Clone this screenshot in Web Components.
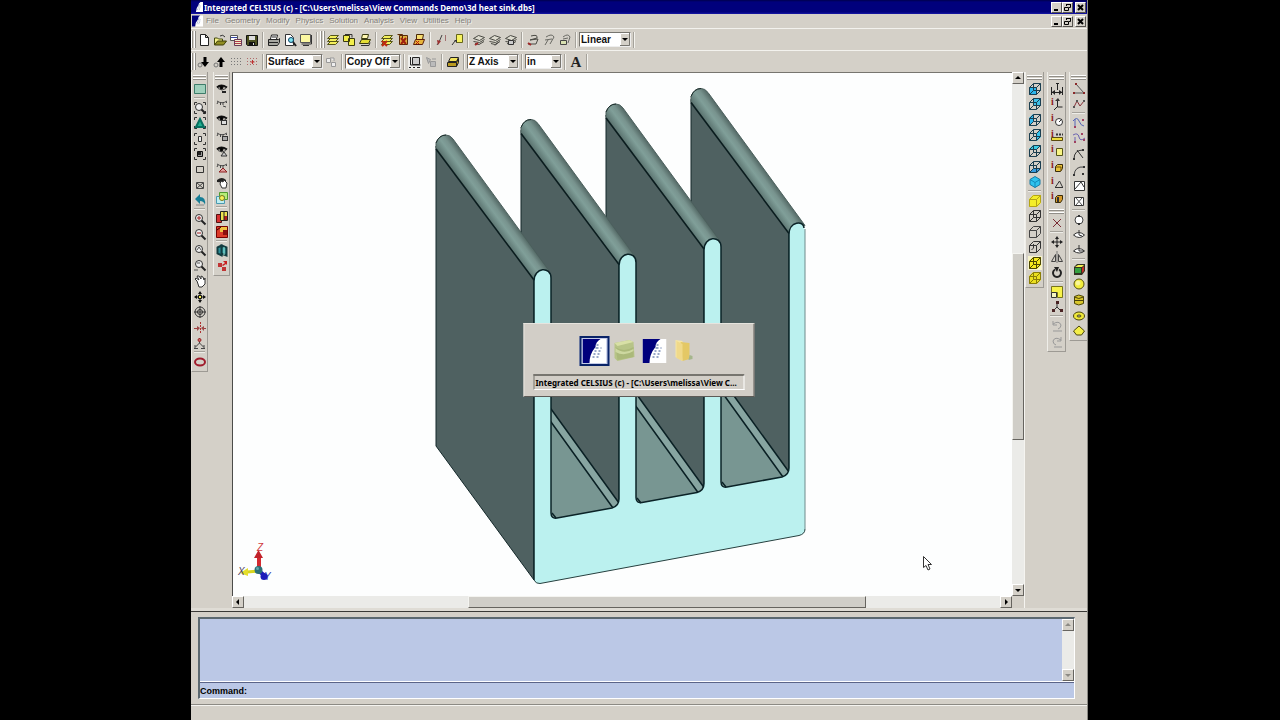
<!DOCTYPE html>
<html lang="en">
<head>
<meta charset="utf-8">
<title>Integrated CELSIUS (c)</title>
<style>
  html, body { margin: 0; height: 100%; background: #000; }
  body { font-family: "Liberation Sans", Arial, sans-serif; font-size: 8px; color: #000; }
</style>
</head>
<body>
<celsius-app></celsius-app>

<script>
/* ---------- icon drawings, 14 x 14 grid ---------- */
const p = (d, s = '#222', f = 'none', w = 1) => `<path d="${d}" stroke="${s}" fill="${f}" stroke-width="${w}"/>`;
const fill = (d, f) => `<path d="${d}" fill="${f}"/>`;
const circ = (x, y, r, s = '#222', f = 'none', w = 1) => `<circle cx="${x}" cy="${y}" r="${r}" stroke="${s}" fill="${f}" stroke-width="${w}"/>`;

const FACES = {
  front: 'M1 5h8v8h-8z', back: 'M5 1h8v8h-8z', left: 'M1 5l4-4v8l-4 4z', right: 'M9 5l4-4v8l-4 4z',
  top: 'M1 5l4-4h8l-4 4z', bottom: 'M1 13l4-4h8l-4 4z', all: 'M1 5l4-4h8v8l-4 4h-8z'
};
const WIRE = 'M1.500 5.500h7v7h-7z M5.500 1.500h7v7h-7z M1.500 5.500l4-4 M8.500 5.500l4-4 M8.500 12.500l4-4 M1.500 12.500l4-4';
const SOLID = 'M1.500 5.500h7v7h-7z M1.500 5.500l4-4h7v7l-4 4 M8.500 5.500l4-4';
const cube = (face, color, lines = WIRE, s = '#1a3e50') => (face ? fill(FACES[face], color) : '') + p(lines, s);

const eye = extra => p('M2 5.5q4-4 10 0', '#111', 'none', 2) + p('M3 6.5q4 3 8 0', '#444') + circ(6.5, 5.5, 1.5, '#000', '#000') + extra;
const lash = extra => p('M2 4q5 3.500 10 0 M3 5l-1 2 M5.500 6v2 M8 6v2 M11 5l1 1', '#444') + extra;
const lens = extra => circ(6, 6, 3.5, '#333', '#eee') + p('M8.500 8.500l4 4', '#222', 'none', 2) + extra;
const box = (x, y, f = '#f4ef84', s = '#333') => `<rect x="${x}.5" y="${y}.5" width="5" height="4" fill="${f}" stroke="${s}"/>`;
const sheets = extra => p('M1.500 11.500l3-3h8l-3 3z M1.500 8.500l3-3h8l-3 3z M1.500 5.500l3-3h8l-3 3z', '#55551a', '#f4f05c') + extra;
const gsheets = extra => p('M1.500 5.500l5-3 6 2-5 3z M1.500 8.500l6 1 5-3 M3 10.500l4 1 5-3', '#4a4a44', '#dedcd0') + extra;
const corners = extra => p('M1.500 4v-2.500h2.500 M10 1.500h2.500v2.500 M12.500 10v2.500h-2.500 M4 12.500h-2.500v-2.500', '#333') + extra;
const info = extra => `<text x="1" y="8" fill="#8e1c1c" font-family="Liberation Serif, serif" font-weight="bold" font-size="10">i</text>` + extra;

const ICONS = {
  new: p('M3.500 1.500h5l3 3v8h-8z M8.500 1.500v3h3', '#222', '#fff'),
  open: p('M1.500 12v-7h3l1 1h4v2', '#444a10', '#f4f08a') + p('M1.500 12l3-4h9l-3 4z', '#3c3c08', '#8f8c22') + p('M7 3q3-2 5 1', '#333'),
  merge: p('M1.500 2.500h7v5h-7z', '#555', '#fff') + p('M2 4.500h6', '#3647a5') + p('M5.500 6.500h7v6h-7z', '#6a3b58', '#eec') + p('M6 8.500h6 M6 10.500h6', '#b03a4a'),
  save: p('M1.500 2.500h11v10h-10l-1-1z', '#111', '#4b5020') + fill('M4 3h6v4h-6z', '#ddd') + fill('M4 9h6v3h-6z', '#111') + fill('M8 10h1v2h-1z', '#ddd'),
  print: p('M3.500 6l1-4h6l-1 4', '#222', '#fff') + p('M1.500 6.500h10l1-1v4l-2 3h-9z', '#222', '#a7a7a0') + p('M2 9.500h9 M5 4h4', '#222'),
  preview: p('M2.500 1.500h5l3 3v8h-8z', '#333', '#fff') + circ(8, 7, 2.5, '#146', '#7fe3ef') + p('M10 9l3 4', '#222', 'none', 2),
  layout: p('M1.500 1.500h10v8h-10z', '#555', '#fbf7a0') + p('M12.500 2v9h-10 M4 12.500h6', '#333'),
  sheet1: sheets(''),
  sheet2: p('M1.500 2.500h6v6h-6z M6.500 5.500h6v7h-6z', '#3a3a10', '#f2ee4a') + p('M3 1.500h7v3', '#333'),
  sheet3: p('M4.500 1.500h6l-1 4h-6z', '#3a3a10', '#fff8b0') + p('M1.500 10.500l2-4h9l-2 4z', '#3a3a10', '#e5de36') + p('M3 12.500h8l1-3', '#333'),
  del1: sheets(p('M2 8l5 5 M7 8l-5 5', '#c02a10', 'none', 2)),
  del2: p('M3.500 2.500h8v9h-8z M1.500 1.500h5v4', '#5a2a08', '#e0b040') + p('M5 5l5 6 M10 5l-5 6', '#a02010', 'none', 2),
  del3: p('M4.500 1.500h7l-1 5h-6z', '#4a2a08', '#f6dd70') + p('M1.500 11.500l2-5h9l-2 5z', '#5a1c08', '#e6b43a') + p('M4 8l3 3 M7 8l-3 3', '#b81808'),
  pick: p('M3 12l2-3 3-7', '#444') + p('M11.500 2v6', '#a07070') + fill('M3 7l4 1-3 4z', '#9c3030'),
  pickbox: p('M6.500 1.500h6v8h-6z', '#66661a', '#f6f260') + p('M2 12l3-4', '#333') + fill('M4 7h3v3z', '#333'),
  g1: gsheets(p('M3 12l3-2', '#a02828', 'none', 2)),
  g2: gsheets(p('M7 12.500l3-3', '#333')),
  g3: gsheets(p('M4.500 7.500h5v4h-5z', '#333', '#ccc')),
  h1: p('M5 3q7-2 6 2l-7 2 8-1-2 5h-8', '#4a4a44') + p('M2 10l3 2', '#a02828', 'none', 2),
  h2: p('M4 4q6-4 8 0l-4 7 M3 7l7-1 M3 12l3-5', '#6a6a64'),
  h3: p('M5 4q5-4 7 0l-2 6 M5 6l5-1', '#6a6a64') + p('M2.500 7.500h6v4h-6z', '#444', '#d8e0b0'),
  dotdown: circ(3, 10, 2, '#777') + p('M8 2v6', '#000', 'none', 3) + fill('M4 7h8l-4 5z', '#000'),
  dotup: circ(3, 10, 2, '#777') + p('M8 6v6', '#000', 'none', 3) + fill('M4 7h8l-4-5z', '#000'),
  grid: '<path d="M2 3.500h10 M2 6.500h10 M2 9.500h10" stroke="#777" stroke-dasharray="1 2"/>',
  snap: '<path d="M2 3.500h10 M2 6.500h10 M2 9.500h10" stroke="#b06a6a" stroke-dasharray="1 2"/>' + p('M7.500 5v4 M5.500 7h4', '#c03030'),
  ghost: p('M2.500 3.500h4v4h-4z M7.500 7.500h4v4h-4z M6 3h4v3', '#999', '#eee'),
  frame: '<rect width="14" height="14" fill="#efefec"/>' + p('M4.500 2.500h7v7h-7z', '#222', '#ccc') + p('M2.500 2v8h10 M1 12.500h2 M5 12.500h2 M9 12.500h3', '#222'),
  ghost2: p('M2.500 2.500l4 2-2 4z M6.500 6.500h5v5h-5z', '#999', '#bbb') + p('M8 4h4', '#999'),
  slab: p('M4.500 2.500h8l-2 4h-8z', '#222', '#f3e45a') + p('M1.500 7.500h9v4h-9z M10.500 7.500l2-4v4l-2 4', '#222', '#b99a20'),
  bold: `<text x="7" y="12" text-anchor="middle" fill="#222" font-family="Liberation Serif, serif" font-weight="bold" font-size="15">A</text>`,

  region: fill('M1 2h12v10h-12z', '#9fd0bc') + p('M1.500 2.500h11v9h-11z', '#3e7c6a'),
  zoomwin: corners(lens('')),
  zoomfit: corners(p('M3 11l4-8 4 8z', '#087060', '#20b090', 2)),
  exts: corners(p('M5.500 4.500h3v5h-3z', '#333', '#eee')),
  extf: corners(p('M4.500 4.500h5v5h-5z', '#111', '#999') + fill('M5 5h3v3h-3z', '#222')),
  sq: p('M3.500 4.500h7v6h-7z', '#333'),
  sqx: p('M3.500 4.500h7v6h-7z M4 5l6 5 M10 5l-6 5', '#444'),
  undoview: fill('M2 6l5-5v3q6 0 5 8-1-4-5-4v3z', '#177d95') + p('M3 12h8', '#888'),
  zin: lens(p('M4 6h4 M6 4v4', '#a02020')), zout: lens(p('M4 6h4', '#a02020')),
  z2: lens(p('M4 7l2-3 2 3', '#555')), z3: lens(p('M4 5h3 M1 12h4', '#555')),
  hand: p('M4 7l-2-2 1-1 3 2-2-4 2 0 2 3 0-3 2 1 1 3 1-2 0 6-3 3h-3z', '#333', '#fff'),
  pan: p('M7 2v10 M2 7h10', '#111') + p('M5.500 5.500h3v3h-3z', '#111', '#f4ed50') + fill('M7 1l2 3h-4z M7 13l2-3h-4z M1 7l3-2v4z M13 7l-3-2v4z', '#111'),
  target: circ(7, 7, 5, '#333') + circ(7, 7, 2.5, '#333') + p('M7 1v12 M1 7h12', '#333'),
  flip: '<path d="M7.500 1v12" stroke="#b03030" stroke-dasharray="2 1"/>' + p('M1 7.500h3 M10 7.500h3', '#a04040') + fill('M4 5l3 2-3 3z M11 5l-3 2 3 3z', '#9c4848'),
  nodes: p('M6.500 2v5 M6.500 7l-4 4 M6.500 7l4 4 M1 12.500h4 M8 12.500h4 M2 9v3 M11 9v3', '#444') + circ(6.5, 4, 1.5, '#922', '#c66'),
  ring: `<ellipse cx="7" cy="7" rx="5" ry="3.500" stroke="#a01c2c" stroke-width="2"/>`,
  eye1: eye(p('M7 10h4', '#222', 'none', 2)),
  lash1: lash(p('M8 9l3 1', '#444')),
  eye2: eye(box(6, 7, '#ddd')), lash2: lash(box(7, 7, '#aaa')),
  eye3: eye(p('M6 12l3-4 3 4z', '#333', '#ccc')), lash3: lash(p('M4 12l4-4 4 4z', '#8e2020', '#e0a0a0')),
  eyehand: fill('M2 4q5-4 9 0v3l-9-1z', '#222') + p('M5 8l1-3 2 1 1-2 3 3-1 5h-4z', '#333', '#fff'),
  overlap: p('M4.500 1.500h8v7h-8z', '#4f9a30', '#b6ec7a') + p('M1.500 5.500h8v7h-8z', '#4a9ab0', '#bfeef2') + circ(7, 7, 2.5, '#787818', '#f8f15a'),
  cols1: p('M1.500 4.500h5v8h-5z', '#511', '#d83030') + p('M5.500 1.500h7v9h-7z', '#222', '#eee250') + fill('M9 6h3v4h-3z', '#b02020') + p('M9 2v9', '#222'),
  cols2: p('M1.500 1.500h11v11h-11z', '#700', '#dc3a28') + fill('M5 2h7v5h-7z', '#f0c040') + fill('M8 5h4v5h-4z', '#8c1010') + p('M2 5l4-3', '#300'),
  cols3: p('M2.500 3.500l4-2v10l-4-2z M6.500 1.500l5 2v8l-5-2z', '#123c40', '#2b8f98', 2) + p('M9 3v8', '#9ed'),
  redmove: fill('M8 2h4v4l-1-1-3 2-1-1 3-2z', '#c82020') + fill('M3 4h4v4h-4z M7 8h4v4h-4z', '#c03434'),

  cFront: cube('front', '#2cb7ee'), cBack: cube('back', '#3fbfe8'), cLeft: cube('left', '#2cb7ee'),
  cRight: cube('right', '#37c3ee'), cTop: cube('top', '#3ccbe4'), cBottom: cube('bottom', '#379ce0'),
  cIso: p('M7 1.500l5 3v5l-5 3-5-3v-5z', '#167ba5', '#2fc3ee') + p('M2 4.500l5 3 5-3 M7 7.500v5', '#1389ba'),
  cYel: cube('all', '#f4ee2a', SOLID, '#b5a514'), cWire: cube('', '', WIRE, '#333'), cHid: cube('', '', SOLID, '#444'),
  cHid2: cube('', '', SOLID + ' M3.500 10l2-2v-4', '#333'),
  cWireSel: '<rect width="14" height="14" fill="#f6f3cd"/>' + cube('all', '#f5e91c', WIRE, '#4b4600'),
  cYel2: cube('all', '#ebdf20', WIRE, '#8a7d08'),

  dim: p('M1.500 5v8 M12.500 5v8 M2 10.500h10 M7.500 2v6', '#222') + fill('M2 10l3-2v5z M12 10l-3-2v5z M6 1h3v1h-3z', '#222'),
  iaxis: info(p('M7.500 3v7h5 M7 10l-3 3', '#222') + fill('M5 4l3-3 2 3z', '#333')),
  icirc: info(circ(9, 9, 3.5, '#333', '#fff') + p('M9 9l3-3', '#333')),
  irule: info(p('M1.500 8.500h11v3h-11z', '#5a4a10', '#eddc3c') + '<path d="M6 5.500h7" stroke="#333" stroke-dasharray="2 1" stroke-width="2"/>'),
  ibox: info(p('M6.500 4.500h6v7h-6z', '#55551a', '#f8f484')),
  ivol: info(p('M5.500 6.500l2-2h5v4l-2 3h-5z', '#3a2c08', '#e7c13a') + p('M6 7h5v4', '#6a4c08')),
  iang: info(p('M5 11.500h8 M5.500 11l4-6 3 6', '#333')),
  imass: info(p('M5.500 6.500l2-2h5v4l-2 3h-5z', '#3a2c08', '#d59a2a') + p('M8 6v5', '#333', 'none', 2)),
  x: p('M3 3l8 8 M11 3l-8 8', '#7a2c34'),
  move: p('M7 3v8 M3 7h8', '#222') + fill('M7 1l2 3h-4z M7 13l2-3h-4z M1 7l3-2v4z M13 7l-3-2v4z', '#222'),
  mirror: p('M1.500 11.500l4-7v7z M12.500 11.500l-4-7v7z', '#444') + p('M7 1v12', '#777'),
  rotate: p('M9 3.500a4 4 0 1 1-4 0', '#222', 'none', 2) + fill('M4 1h5l-2 5z', '#222'),
  scale: p('M1.500 1.500h11v11h-5v-5h-6z', '#77751a', '#f8f34a') + p('M1.500 7.500h5v5h-5z', '#333', '#f7f7c0'),
  axes: p('M7 7v-5 M7 7l-4 4 M7 7l4 4', '#333') + fill('M6 1h3v3h-3z M2 9h3v3h-3z M10 9h3v3h-3z', '#4a2424'),
  undo: p('M3 5q6-4 8 1 0 3-3 4 M3 2v4h4 M3 12h9', '#999'),
  redo: p('M11 5q-6-4-8 1 0 3 3 4 M11 2v4h-4 M4 12h8', '#999'),
  line: p('M4 2l8 9h-10', '#555') + fill('M3 1h2v2h-2z M1 10h2v2h-2z M11 10h2v2h-2z', '#8a2828'),
  poly: p('M2 10l3-6 3 5 4-5', '#8a3038') + fill('M1 9h2v2h-2z M11 3h2v2h-2z M4 3h2v2h-2z', '#555'),
  spl1: p('M1 5q4-5 6 0t5 5 M3 3v9', '#5566b8') + fill('M10 3h2v2h-2z M2 10h2v2h-2z', '#a04060'),
  spl2: p('M1 4q5-3 6 2t6 1 M3 6v6', '#6a62b0') + fill('M9 2h2v2h-2z M2 10h2v2h-2z M11 8h2v2h-2z', '#a04060'),
  arc1: p('M2 12q0-9 9-9 M5 3l6 8', '#333') + fill('M1 11h2v2h-2z M10 2h2v2h-2z', '#333'),
  arc2: p('M2 12q1-9 10-8', '#444') + fill('M1 11h2v2h-2z M11 3h2v2h-2z M10 10h2v2h-2z', '#333'),
  prof1: p('M2.500 3.500h10v9h-10z', '#333', '#fff') + p('M3 11l6-7 3 5', '#333'),
  prof2: p('M2.500 3.500h9v8h-9z', '#333', '#fff') + p('M4 4l6 7 M10 4l-6 7', '#555'),
  ci1: circ(7, 7, 4, '#444', '#fff') + fill('M6 2h2v2h-2z M6 10h2v2h-2z', '#333'),
  ci2: p('M1.500 7q5-5 11 0-5 5-11 0z', '#333', '#fff') + p('M7 2v5l3 1', '#333'),
  ci3: p('M1.500 8q5-5 11 0-5 4-11 0z', '#333', '#fff') + p('M7 2v6h5', '#333'),
  vbox: fill('M2 5l3-3h8v7l-3 4h-8z', '#332') + fill('M3 6h6v5h-6z', '#36a040') + fill('M3 5l3-2h6l-2 2z', '#f4ed50') + fill('M10 6l2-2v5l-2 2z', '#c83028'),
  vsph: circ(7, 7, 5, '#55500f', '#f2ec3c') + circ(6, 6, 2, '#faf79c', '#faf79c'),
  vcyl: p('M2.500 3.500q4-3 9 0v7q-5 3-9 0z', '#4a440a', '#d9c62c') + p('M2.500 4q4 3 9 0 M3 7.500h8', '#4a440a'),
  vtor: `<ellipse cx="7" cy="7" rx="5.500" ry="4" fill="#f0e93a" stroke="#4a440a"/><ellipse cx="7" cy="7" rx="2" ry="1" fill="#d4d0c8" stroke="#4a440a"/>`,
  vcone: p('M7 2l5.500 5-3 4h-5l-3-4z', '#4a440a', '#f4ee48'),
};

const define = (tag, css, html, after) => {
  const tpl = document.createElement('template');
  tpl.innerHTML = `<style>*{box-sizing:border-box}${css}</style>${html}`;
  customElements.define(tag, class extends HTMLElement {
    constructor() {
      super();
      this.attachShadow({ mode: 'open' }).append(tpl.content.cloneNode(true));
    }
    connectedCallback() { if (after) after(this, this.shadowRoot); }
  });
};

/* A run of icon buttons; the names attribute lists the icons */
define('tool-group', `
  :host { display: flex; flex: none; }
  :host([vertical]) { display: grid; grid-auto-rows: 1fr; justify-content: center; }
  button { display: flex; align-items: center; justify-content: center; width: 16px; height: 100%; min-height: 0; padding: 0; margin: 0; border: 0; background: none; }
  svg { display: block; width: 14px; height: 14px; flex: none; }`, '',
  (el, root) => {
    for (const n of el.getAttribute('names').split(' ')) {
      const b = document.createElement('button');
      b.type = 'button';
      b.setAttribute('aria-label', n);
      b.innerHTML = `<svg viewBox="0 0 14 14" fill="none">${ICONS[n]}</svg>`;
      root.append(b);
    }
  });

define('tool-sep', `
  :host { display: block; flex: none; width: 6px; height: 16px; padding: 0 2px; }
  i { display: block; height: 100%; border-left: 1px solid #a5a29b; border-right: 1px solid #f4f3ee; }
  :host([vertical]) { width: auto; height: 3px; padding: 0 2px; }
  :host([vertical]) i { height: 2px; border: 0; border-top: 1px solid #a5a29b; border-bottom: 1px solid #eeede8; }`, '<i></i>');

define('tool-grip', `
  :host { display: flex; flex: none; gap: 1px; width: 5px; height: 17px; }
  i { flex: 1; border-left: 1px solid #fff; border-right: 1px solid #918e88; }
  :host([vertical]) { flex-direction: column; width: auto; height: 9px; padding: 3px 1px 1px; }
  :host([vertical]) i { border: 0; border-top: 1px solid #fff; border-bottom: 1px solid #918e88; }`, '<i></i><i></i>');

define('tool-select', `
  :host { display: flex; flex: none; position: relative; height: 15px; border: 1px solid #77756f; border-right-color: #eee; border-bottom-color: #eee; background: #fff; }
  select { appearance: none; width: 100%; height: 100%; margin: 0; padding: 0 0 0 1px; border: 0; border-radius: 0; background: none; color: #111; font: bold 10px "Liberation Sans", Arial, sans-serif; }
  svg { position: absolute; right: 0; top: 0; width: 10px; height: 13px; pointer-events: none; }`,
  `<select><option></option></select>
   <svg viewBox="0 0 10 13"><path d="M0 0h10v13h-10z" fill="#d4d0c8"/><path d="M.5 12.500v-12h9" stroke="#fff" fill="none"/><path d="M9.500 0v12.500h-9.500" stroke="#77756f" fill="none"/><path d="M2 5h6l-3 3z" fill="#000"/></svg>`,
  (el, root) => {
    root.querySelector('option').textContent = el.getAttribute('value');
    root.querySelector('select').setAttribute('aria-label', el.getAttribute('label'));
  });

define('tool-row', `
  :host { display: flex; align-items: center; height: 22px; border-top: 1px solid #f3f2ee; }`, '<slot></slot>');

define('tool-column', `
  :host { display: flex; flex-direction: column; align-self: flex-start; flex: none; width: 19px; padding-bottom: 1px; border-left: 1px solid #efeee9; border-right: 1px solid #9d9a94; border-bottom: 1px solid #9d9a94; }`, '<slot></slot>');

/* Celsius program icon */
const APP_ICON = `<path d="M0 0h24v24h-24z" fill="#fff"/><path d="M0 0h18q-5 3-5 8-6 7-6 16h-7z" fill="#00007c"/><path d="M14 6h2M13 9h3M12 12h2M16 12h2M11 15h2M15 15h2M10 18h2M14 18h2M18 9h1" stroke="#33508f" stroke-width="1"/>`;

define('window-buttons', `
  :host { display: flex; flex: none; }
  button { width: 11px; height: 11px; padding: 0; border: 1px solid; border-color: #fff #55534f #55534f #fff; background: #d4d0c8; }
  button:last-child { margin-left: 2px; }
  svg { display: block; width: 9px; height: 9px; }`,
  `<button aria-label="Minimize"><svg viewBox="0 0 9 9"><path d="M2 7h4" stroke="#000" stroke-width="2"/></svg></button>
   <button aria-label="Restore"><svg viewBox="0 0 9 9" fill="none" stroke="#000"><path d="M3.500 3v-1.500h4v3h-1.500M3 1.500h5M1.500 4.500h4v3h-4z"/></svg></button>
   <button aria-label="Close"><svg viewBox="0 0 9 9"><path d="M2 2l5 5M7 2l-5 5" stroke="#000" stroke-width="2"/></svg></button>`);

define('title-bar', `
  :host { display: flex; align-items: center; height: 14px; padding: 0 1px 0 2px; background: linear-gradient(#00004c, #00007c 2px 12px, #1818a8); color: #fff; font: bold 8px "Noto Sans", "Liberation Sans", sans-serif; }
  svg { width: 10px; height: 10px; margin-right: 1px; flex: none; }
  span { flex: 1; white-space: nowrap; overflow: hidden; }`,
  `<svg viewBox="0 0 24 24">${APP_ICON}</svg><span><slot></slot></span><window-buttons></window-buttons>`);

define('menu-bar', `
  :host { display: flex; align-items: center; height: 14px; padding: 0 1px; }
  svg { width: 11px; height: 12px; margin-right: 3px; flex: none; }
  nav { display: flex; flex: 1; gap: 6px; }
  button { padding: 0; border: 0; background: none; color: #85827c; font: 8px/12px "Liberation Sans", Arial, sans-serif; text-shadow: 1px 1px #f0efe9; }`,
  `<svg viewBox="0 0 24 24">${APP_ICON}</svg>
   <nav>${['File', 'Geometry', 'Modify', 'Physics', 'Solution', 'Analysis', 'View', 'Utilities', 'Help'].map(t => `<button>${t}</button>`).join('')}</nav>
   <window-buttons></window-buttons>`);

/* Scroll bar: shares = flex shares of the track before, in and after the thumb */
define('scroll-bar', `
  :host { display: flex; flex: none; width: 12px; flex-direction: column; background: #ebebe8; }
  :host([horizontal]) { width: auto; height: 12px; flex-direction: row; }
  button { flex: none; width: 12px; height: 12px; padding: 0; border: 1px solid; border-color: #fff #66645f #66645f #fff; background: #d4d0c8; }
  svg { display: block; width: 10px; height: 10px; }
  :host([horizontal]) svg { transform: rotate(-90deg); }
  b { border: 1px solid; border-color: #f4f4f0 #66645f #66645f #f4f4f0; background: #d0cec8; }
  path { fill: #000; }
  :host([idle]) b { display: none; }
  :host([idle]) path { fill: #8c8a84; }`,
  `<button aria-label="Back"><svg viewBox="0 0 10 10"><path d="M2 6h6l-3-3z"/></svg></button><i></i><b></b><em></em>
   <button aria-label="Forward"><svg viewBox="0 0 10 10"><path d="M2 4h6l-3 3z"/></svg></button>`,
  (el, root) => {
    const [a, b, c] = (el.getAttribute('shares') || '1 0 1').split(' ');
    root.querySelector('i').style.flex = a;
    root.querySelector('b').style.flex = b;
    root.querySelector('em').style.flex = c;
  });

/* ---------- heat sink drawing ---------- */
/* Painted from the rear right: each fin hides what lies behind it, so the
   channel floor beside a fin goes down before the next fin to the left. */
const fins = [3, 2, 1, 0].map(i => {
  const x = 85 * i, y = -15.5 * i;
  const floor = i === 0 ? '' : `<g transform="translate(${x - 85} ${y + 15.5})">
    <path d="M546 402L619 503V509L546 522z" fill="#789692"/>
    <path d="M551 409L619 503L613 508L551 422z" fill="#87a5a1"/>
    <path d="M546 402L619 503M546 415L613 508" stroke="#0a2024" stroke-width="1.500" fill="none"/></g>`;
  return `<g transform="translate(${x} ${y})">
    <path d="M436 146L534 279V580L436 446z" fill="#4f6161" stroke="#14282a"/>
    <path d="M436 148V143Q439 135 446 135Q450 135 453 139L550 272L534 280z" fill="url(#roof)" stroke="#4c605d"/>
    <path d="M436 143Q439 135 446 135" fill="none" stroke="#1c2e2c"/>
    <path d="M436 149L534 280" stroke="#0a1c1e" stroke-width="1.500"/></g>${floor}`;
});
const combTop = 'M534 580V281C534 267 551 266 551 278V513Q551 519 557 518L612 508Q619 506 619 499V265.500C619 251.500 636 250.500 636 262.500V497.500Q636 503.500 642 502.500L697 492.500Q704 490.500 704 483.500V250C704 236 721 235 721 247V482Q721 488 727 487L782 477Q789 475 789 468V234.500C789 221 804 220 804 228';
const combRest = 'L805 231V529Q805 534 799 535.500L540 583.500Q536 584 534 580';

define('model-view', `
  :host { display: block; min-width: 0; background: #fdfefe; border-left: 1px solid #4c4c4a; border-top: 1px solid #77756f; overflow: hidden; }
  svg { display: block; width: 100%; height: 100%; }
  text { font: italic 10px "Liberation Sans", Arial, sans-serif; }`,
  `<svg viewBox="233 73 779 523" role="img" aria-label="3d heat sink">
    <defs><linearGradient id="roof" gradientUnits="userSpaceOnUse" x1="485" y1="213" x2="500" y2="202">
      <stop offset="0" stop-color="#5f7874"/><stop offset=".4" stop-color="#809f99"/><stop offset=".65" stop-color="#78938e"/><stop offset="1" stop-color="#4e625f"/></linearGradient></defs>
    ${fins.join('')}
    <path d="${combTop + combRest}z" fill="#bbf1ef"/>
    <path d="${combTop}" fill="none" stroke="#0b2327" stroke-width="1.500"/>
    <path d="M805 229V529" fill="none" stroke="#6f8a8a"/>
    <path d="M805 529Q805 534 799 535.500L540 583.500Q536 584 534 580" fill="none" stroke="#26403f"/>
    <path d="M552 513l4 5M637 498l4 5M722 482l4 5" stroke="#0b2327" stroke-width="1.500"/>
    <g>
      <path d="M259 569V556" stroke="#d42a30" stroke-width="4"/><path d="M254 558l4.500-8 4.500 8z" fill="#c1222a"/>
      <text x="257" y="551" fill="#d03a40">Z</text>
      <path d="M259 571L247 572" stroke="#d8d61e" stroke-width="3"/><path d="M248 568v8l-8-3z" fill="#e6de2a"/>
      <text x="238" y="575" fill="#4a3a5a">X</text>
      <text x="264" y="580" fill="#3038b0">Y</text>
      <path d="M259 571l6 5" stroke="#1818b8" stroke-width="4"/><circle cx="264" cy="576.500" r="3.500" fill="#1c1cba"/>
      <circle cx="258.500" cy="570" r="4" fill="#2a6f78"/><circle cx="257.500" cy="568.500" r="1.500" fill="#60a8aa"/>
    </g>
    <path d="M923.500 556.500v11l2.500-2 2 4.500 2-1-2-4.500h3.500z" fill="#fff" stroke="#333"/>
  </svg>`);

define('view-pane', `
  :host { display: grid; flex: 1; min-width: 0; grid-template: 1fr 12px / 1fr 12px; background: #d4d0c8; border-right: 1px solid #f5f4f0; }`,
  `<model-view></model-view><scroll-bar shares="168 183 143"></scroll-bar><scroll-bar horizontal shares="225 397 134"></scroll-bar>`);

define('command-pane', `
  :host { display: block; padding: 5px 12px 5px 7px; border-top: 1px solid #3a3936; border-bottom: 1px solid #8c8a84; }
  .frame { border: 1px solid; border-width: 2px 1px 1px 2px; border-color: #5b6870 #fff #fff #5b6870; background: #bbc8e6; }
  .log { display: flex; height: 63px; border-bottom: 1px solid #fff; }
  textarea { flex: 1; min-width: 0; resize: none; border: 0; padding: 2px; margin: 0; background: none; overflow: hidden; font: bold 9px "Liberation Sans", sans-serif; }
  .line { display: flex; align-items: center; height: 16px; border-top: 1px solid #5b6488; font: bold 9px "Liberation Sans", Arial, sans-serif; }
  input { flex: 1; min-width: 0; height: 12px; border: 0; padding: 0 2px; background: none; font: inherit; }`,
  `<div class="frame"><div class="log"><textarea readonly aria-label="Command history"></textarea><scroll-bar idle></scroll-bar></div>
   <div class="line"><label for="cmd">Command:</label><input id="cmd" type="text"></div></div>`);

define('status-bar', `
  :host { display: block; height: 15px; border-top: 1px solid #f5f4f0; }`, '');

define('task-switcher', `
  :host { display: flex; flex-direction: column; align-items: center; width: 231px; padding: 12px 9px 6px; border: 1px solid; border-color: #e6e4de #5d5b57 #5d5b57 #e6e4de; background: #d2cec7; }
  ul { display: flex; margin: 0 0 8px; padding: 0; list-style: none; }
  li { display: flex; padding: 1px; border: 2px solid transparent; }
  li.on { border-color: #0a2468; background: #c3cbe8; }
  li svg { display: block; width: 24px; height: 24px; }
  output { align-self: stretch; height: 16px; padding: 0 1px; border: 1px solid; border-width: 2px 1px 1px; border-color: #77756f #fff #fff #77756f; font: bold 8px/13px "Noto Sans", "Liberation Sans", sans-serif; white-space: nowrap; overflow: hidden; text-overflow: ellipsis; }`,
  `<ul>
    <li class="on"><svg viewBox="0 0 24 24">${APP_ICON}</svg></li>
    <li><svg viewBox="0 0 24 24"><path d="M2 4l15-3 4 2 1 15-17 4-3-3z" fill="#b7c487"/><path d="M2 4l15-3 4 2-16 4z" fill="#d8e0a6"/><path d="M3 8q8 6 18 0v10l-16 3z" fill="#abb97a"/><path d="M3 9q8 7 18 1v2q-9 6-18 1z" fill="#cdd8a0"/></svg></li>
    <li><svg viewBox="0 0 24 24">${APP_ICON}</svg></li>
    <li><svg viewBox="0 0 24 24"><path d="M3 1l7 1v20l-7-4z" fill="#f6e6a4"/><path d="M8 3l9 1v16l-7 2z" fill="#e4c865"/><path d="M4 2l6 3v17l-6-3z" fill="#f0d98a"/><path d="M17 16l3 1v3l-4 1z" fill="#a5b68c"/></svg></li>
  </ul>
  <output><slot></slot></output>`);

const col = (...parts) => `<tool-column><tool-grip vertical></tool-grip>${parts.map((s, i) => {
  if (s === 'grip') return '<tool-grip vertical></tool-grip>';
  const [h, names] = s.split(':');
  const sep = i > 0 && parts[i - 1] !== 'grip' ? '<tool-sep vertical></tool-sep>' : '';
  return `${sep}<tool-group vertical style="height:${h}px" names="${names}"></tool-group>`;
}).join('')}</tool-column>`;
const grp = names => `<tool-group names="${names}"></tool-group>`;
const sep = '<tool-sep></tool-sep>';
const grip = '<tool-grip></tool-grip>';

define('celsius-app', `
  :host { display: grid; grid-template-columns: 191fr 897fr 192fr; min-height: 100vh; background: #000; }
  main { position: relative; grid-column: 2; display: flex; flex-direction: column; min-width: 0; background: #d4d0c8; border-right: 1px solid #8c8a84; }
  .work { display: flex; flex: 1; min-height: 0; border-bottom: 3px solid #dfdcd5; }
  .left, .right { display: flex; flex: none; gap: 3px; width: 41px; overflow: hidden; }
  .left { gap: 5px; }
  .left tool-column { width: 17px; }
  .right { width: 62px; }
  task-switcher { position: absolute; left: 50%; top: 50%; transform: translate(-50%, -50%); }`,
  `<main>
    <title-bar>Integrated CELSIUS (c) - [C:\\Users\\melissa\\View Commands Demo\\3d heat sink.dbs]</title-bar>
    <menu-bar></menu-bar>
    <tool-row>${grip}${grp('new open merge save')}${sep}${grp('print preview layout')}${sep}${grip}${grp('sheet1 sheet2 sheet3')}${sep}${grp('del1 del2 del3')}${sep}${grp('pick pickbox')}${sep}${grp('g1 g2 g3')}${sep}${grp('h1 h2 h3')}${sep}<tool-select style="width:52px" label="Line type" value="Linear"></tool-select>${sep}</tool-row>
    <tool-row>${grip}${grp('dotdown dotup grid snap')}${sep}<tool-select style="width:57px" label="Entity" value="Surface"></tool-select>${grp('ghost')}${sep}<tool-select style="width:56px" label="Copy" value="Copy Off"></tool-select>${sep}${grp('frame ghost2')}${sep}${grp('slab')}${sep}<tool-select style="width:52px" label="Axis" value="Z Axis"></tool-select>${sep}<tool-select style="width:37px" label="Units" value="in"></tool-select>${sep}${grp('bold')}${sep}</tool-row>
    <div class="work">
      <div class="left">
        ${col('16:region', '108:zoomwin zoomfit exts extf sq sqx undoview', '140:zin zout z2 z3 hand pan target flip nodes', '16:ring')}
        ${col('125:eye1 lash1 eye2 lash2 eye3 lash3 eyehand overlap', '31:cols1 cols2', '31:cols3 redmove')}
      </div>
      <view-pane></view-pane>
      <div class="right">
        ${col('109:cFront cBack cLeft cRight cTop cBottom cIso', '93:cYel cWire cHid cHid2 cWireSel cYel2')}
        ${col('125:dim iaxis icirc irule ibox ivol iang imass', 'grip', '16:x', '47:move mirror rotate', '31:scale axes', '32:undo redo')}
        ${col('31:line poly', '94:spl1 spl2 arc1 arc2 prof1 prof2', '46:ci1 ci2 ci3', '78:vbox vsph vcyl vtor vcone')}
      </div>
    </div>
    <command-pane></command-pane>
    <status-bar></status-bar>
    <task-switcher>Integrated CELSIUS (c) - [C:\\Users\\melissa\\View C...</task-switcher>
  </main>`);
</script>
</body>
</html>
